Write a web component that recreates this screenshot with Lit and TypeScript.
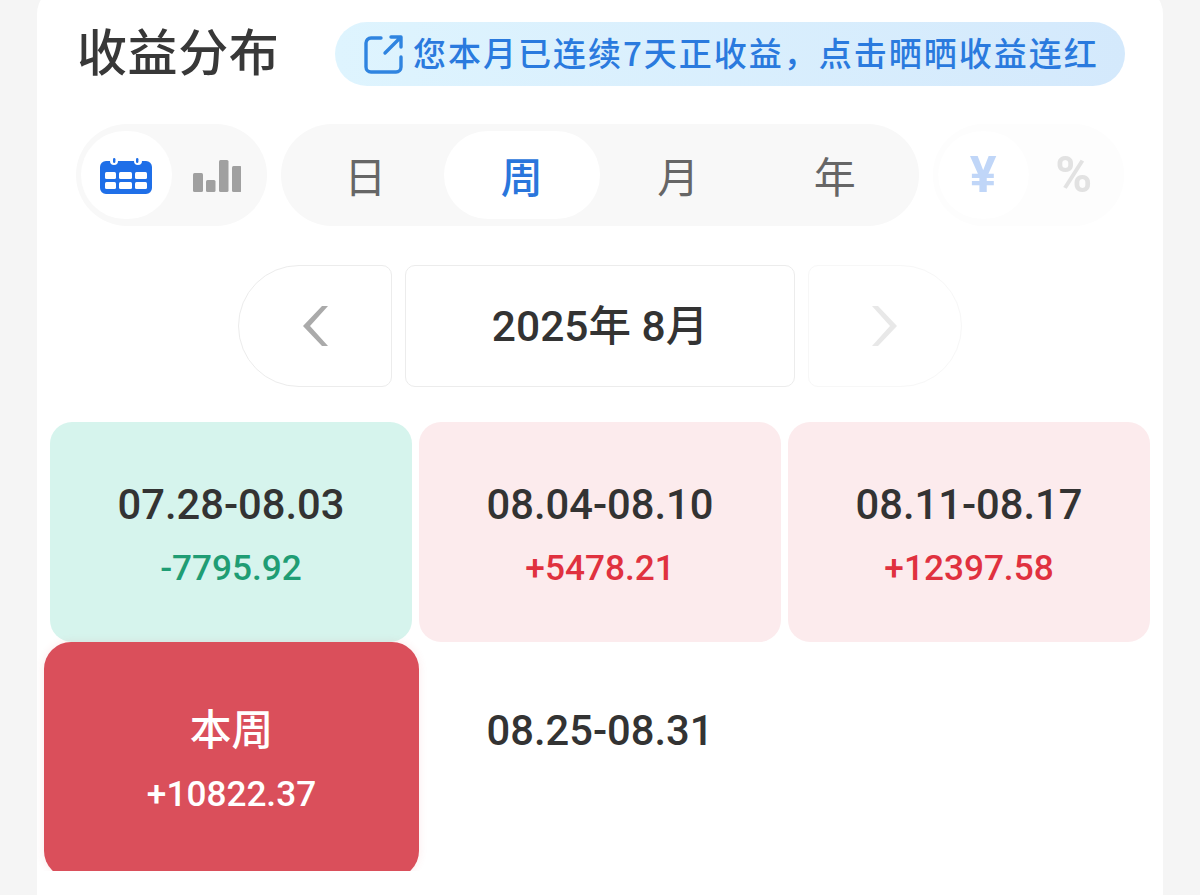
import { LitElement, html, css, nothing } from "lit";
import { customElement } from "lit/decorators.js";

interface Cell { t: string; v?: string; k: string; }
const cells: Cell[] = [
  { t: "07.28-08.03", v: "-7795.92", k: "down" },
  { t: "08.04-08.10", v: "+5478.21", k: "up" },
  { t: "08.11-08.17", v: "+12397.58", k: "up" },
  { t: "本周", v: "+10822.37", k: "now" },
  { t: "08.25-08.31", k: "none" },
];

@customElement("app-root")
export class AppRoot extends LitElement {
  static styles = css`
    :host { display: block; height: 895px; overflow: hidden; background: #f5f5f5; font-family: Roboto, "Noto Sans CJK SC", sans-serif; }
    .card { margin: -14px 37px 0; height: 940px; box-sizing: border-box; background: #fff; border-radius: 28px; padding-top: 36px; }
    .head { display: flex; align-items: center; height: 64px; padding: 0 38px 0 40px; }
    .title { font: 500 50px/64px "Noto Sans CJK SC", sans-serif; color: #383838; letter-spacing: 0.6px; transform: translateY(-5px); }
    .pill { margin-left: auto; width: 790px; height: 64px; box-sizing: border-box; border-radius: 32px; padding-left: 29px; display: flex; align-items: center; gap: 9px; background: linear-gradient(90deg, #def4fe, #d4e9fc); color: #2a7ade; font: 500 33px/64px "Noto Sans CJK SC", sans-serif; letter-spacing: 2px; white-space: nowrap; }
    .pill span { transform: translateY(-2px); }
    .pill svg { flex: none; }
    .controls { display: flex; gap: 14px; margin: 38px 0 0 39px; height: 102px; }
    .group { display: flex; box-sizing: border-box; height: 102px; border-radius: 51px; background: #f8f8f8; padding: 7px 6px; }
    .group.small { width: 191px; padding: 7px 5px; }
    .item { flex: 1; display: flex; align-items: center; justify-content: center; border-radius: 44px; font: 400 42px/1 "Noto Sans CJK SC", sans-serif; color: #666; }
    .item.on { background: #fff; color: #2a76dc; }
    .item svg { transform: translateY(1px); }
    .seg { width: 638px; }
    .seg .item { width: 156.5px; flex: none; }
    .seg .item.on { font-weight: 500; }
    .unit { opacity: 0.28; }
    .unit .item { font: 700 50px/1 Roboto, sans-serif; color: #999; }
    .unit .item.on { color: #1f6fe8; }
    .date { display: flex; justify-content: center; gap: 13px; margin-top: 39px; height: 122px; }
    .nav, .mid { box-sizing: border-box; border: 1px solid #ececec; height: 122px; display: flex; align-items: center; justify-content: center; background: #fff; }
    .nav { width: 154px; }
    .prev { border-radius: 61px 10px 10px 61px; }
    .next { border-radius: 10px 61px 61px 10px; border-color: #f7f7f7; }
    .mid { width: 390px; border-radius: 10px; font: 500 42.5px/1 Roboto, "Noto Sans CJK SC", sans-serif; color: #333; padding-top: 3px; }
    .grid { display: grid; grid-template-columns: repeat(3, 362px); grid-auto-rows: 220px; column-gap: 7px; margin-top: 35px; padding: 0 13px; height: 449px; overflow: hidden; }
    .cell { border-radius: 22px; display: flex; flex-direction: column; align-items: center; padding-top: 57px; box-sizing: border-box; }
    .cell.down { background: #d6f4ed; }
    .cell.up { background: #fcebed; }
    .cell.now { background: #da4f5b; margin: 0 -7px 0 -6px; height: 236px; border-radius: 27px; padding-top: 63px; box-shadow: 0 0 8px rgba(218,79,91,0.12); position: relative; z-index: 1; }
    .cell.none { padding-top: 63px; }
    .t { font: 500 41.7px/52px Roboto, "Noto Sans CJK SC", sans-serif; color: #333; }
    .v { font: 500 35.2px/44px Roboto, sans-serif; margin-top: 15px; }
    .down .v { color: #1f9d74; }
    .up .v { color: #e0313f; }
    .now .t, .now .v { color: #fff; }
  `;

  render() {
    return html`<div class="card">
      <div class="head">
        <div class="title">收益分布</div>
        <div class="pill">
          <svg width="40" height="40" viewBox="0 0 40 40" fill="none" stroke="#2f84e0" stroke-width="3.4" stroke-linecap="round" stroke-linejoin="round">
            <path d="M17 4H7a5 5 0 0 0-5 5v24a5 5 0 0 0 5 5h25a5 5 0 0 0 5-5V23" />
            <path d="M21 19L36 4M27 3h10v10" />
          </svg>
          <span>您本月已连续7天正收益，点击晒晒收益连红</span>
        </div>
      </div>
      <div class="controls">
        <div class="group small">
          <div class="item on">
            <svg width="52" height="36" viewBox="0 0 52 36">
              <path fill="#1f6fe8" d="M6 3h4a4 4 0 0 0 8 0h16a4 4 0 0 0 8 0h4a6 6 0 0 1 6 6v21a6 6 0 0 1-6 6H6a6 6 0 0 1-6-6V9a6 6 0 0 1 6-6z" />
              <rect x="13" y="0" width="2.4" height="5" rx="1.2" fill="#1f6fe8" />
              <rect x="36" y="0" width="2.4" height="5" rx="1.2" fill="#1f6fe8" />
              <g fill="#fff">
                <rect x="5" y="14" width="11" height="7" rx="1.5" /><rect x="19" y="14" width="13" height="7" rx="1.5" /><rect x="35" y="14" width="12" height="7" rx="1.5" />
                <rect x="5" y="24" width="11" height="7" rx="1.5" /><rect x="19" y="24" width="13" height="7" rx="1.5" /><rect x="35" y="24" width="12" height="7" rx="1.5" />
              </g>
            </svg>
          </div>
          <div class="item">
            <svg width="48" height="32" viewBox="0 0 48 32" fill="#a0a0a0">
              <rect x="0" y="13" width="10" height="19" rx="1.5" /><rect x="13" y="20" width="9.5" height="12" rx="1.5" />
              <rect x="26" y="0" width="9.5" height="32" rx="1.5" /><rect x="39" y="6" width="9.5" height="26" rx="1.5" />
            </svg>
          </div>
        </div>
        <div class="group seg">
          ${["日", "周", "月", "年"].map((d) => html`<div class="item ${d === "周" ? "on" : ""}">${d}</div>`)}
        </div>
        <div class="group small unit">
          <div class="item on">¥</div>
          <div class="item">%</div>
        </div>
      </div>
      <div class="date">
        <div class="nav prev">
          <svg width="26" height="40" viewBox="0 0 26 40" fill="#aaa"><path d="M20 0h6L8 20l18 20h-6L1 20z" /></svg>
        </div>
        <div class="mid">2025年 8月</div>
        <div class="nav next">
          <svg width="26" height="40" viewBox="0 0 26 40" fill="#e8e8e8"><path d="M0 0h6l19 20L6 40H0l18-20z" /></svg>
        </div>
      </div>
      <div class="grid">
        ${cells.map((c) => html`<div class="cell ${c.k}">
          <div class="t">${c.t}</div>
          ${c.v ? html`<div class="v">${c.v}</div>` : nothing}
        </div>`)}
      </div>
    </div>`;
  }
}
